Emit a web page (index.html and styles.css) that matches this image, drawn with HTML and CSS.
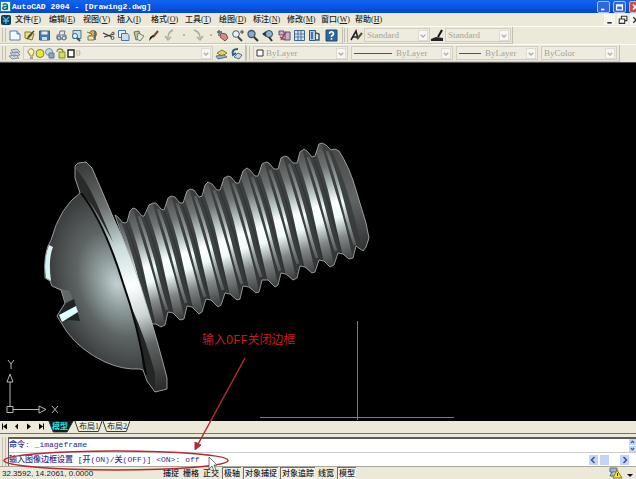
FILE: index.html
```html
<!DOCTYPE html>
<html lang="zh-CN">
<head>
<meta charset="utf-8">
<title>AutoCAD 2004 - [Drawing2.dwg]</title>
<link rel="stylesheet" href="styles.css">
</head>
<body>
<div class="app">
  <header class="titlebar">
    <svg class="app-icon" viewBox="0 0 12 12"><rect x=".5" y=".5" width="11" height="11" fill="#e6f4f0" stroke="#287c8c"/><path d="M3 4.500Q6 1.500 8 4.500V9.500M8 6Q3 5.500 3 8Q4 10.500 8 8" fill="none" stroke="#126878" stroke-width="1.700"/></svg>
    <h1 class="title">AutoCAD 2004 - [Drawing2.dwg]</h1>
    <div class="window-buttons">
      <button class="win" aria-label="最小化"><svg viewBox="0 0 12 12"><path d="M3 9h4" stroke="#fff" stroke-width="2"/></svg></button>
      <button class="win" aria-label="最大化"><svg viewBox="0 0 12 12"><path d="M2.500 3.500h7v6h-7zM2.500 4.500h7" fill="none" stroke="#fff" stroke-width="1.500"/></svg></button>
      <button class="win close" aria-label="关闭"><svg viewBox="0 0 12 12"><path d="M3 3l6 6M9 3l-6 6" stroke="#fff" stroke-width="2"/></svg></button>
    </div>
  </header>

  <nav class="menubar">
    <svg class="menu-icon" viewBox="0 0 12 12"><rect x="1" y="1" width="10" height="10" rx="2" fill="#123c58"/><path d="M3 3l3 3 3-3M6 6v4M3 7h6" stroke="#4cc0e0" stroke-width="1.300" fill="none"/></svg>
    <a href="#">文件(<u>F</u>)</a><a href="#">编辑(<u>E</u>)</a><a href="#">视图(<u>V</u>)</a><a href="#">插入(<u>I</u>)</a><a href="#">格式(<u>O</u>)</a><a href="#">工具(<u>T</u>)</a><a href="#">绘图(<u>D</u>)</a><a href="#">标注(<u>N</u>)</a><a href="#">修改(<u>M</u>)</a><a href="#">窗口(<u>W</u>)</a><a href="#">帮助(<u>H</u>)</a>
    <div class="doc-buttons">
      <button aria-label="最小化文档"><svg viewBox="0 0 10 10"><path d="M3 8h4" stroke="#333" stroke-width="1.500"/></svg></button>
      <button aria-label="还原文档"><svg viewBox="0 0 10 10"><path d="M4 4V2h5v4H7M2 4.500h5v4H2z" fill="none" stroke="#333"/></svg></button>
      <button aria-label="关闭文档"><svg viewBox="0 0 10 10"><path d="M3 3l5 5M8 3l-5 5" stroke="#333" stroke-width="1.300"/></svg></button>
    </div>
  </nav>

  <div class="toolrow">
    <div class="toolbar standard">
      <span class="grip"></span>
      <div class="group">
        <button aria-label="新建"><svg viewBox="0 0 13 13"><path d="M2 2h7l3 3v6H2z" fill="#f4faff" stroke="#5c80a0"/><path d="M9 2v3h3" fill="#a8cce4" stroke="#5c80a0"/></svg></button>
        <button aria-label="打开"><svg viewBox="0 0 13 13"><path d="M2 3h5l4 2-2 6-7-2z" fill="#f0dc88" stroke="#867440"/><path d="M5 8l6-6M4 10l5-5" stroke="#4a5034" stroke-width="1.500"/></svg></button>
        <button aria-label="保存"><svg viewBox="0 0 13 13"><path d="M1.500 2h10v9h-10z" fill="#4c7aa6" stroke="#365c80"/><path d="M3.500 2.500h6v3h-6z" fill="#e4eef4"/><path d="M4 8h5v3H4z" fill="#c4dcea"/></svg></button>
      </div>
      <div class="group">
        <button aria-label="打印"><svg viewBox="0 0 13 13"><path d="M4 6l1-4h5l-1 4M2 6h9v4H2z" fill="#e8ebee" stroke="#647684"/><circle cx="4" cy="9" r="2" fill="#b4c0c8" stroke="#54687a"/><circle cx="9" cy="9" r="2" fill="#d8e0e6" stroke="#54687a"/></svg></button>
        <button aria-label="打印预览"><svg viewBox="0 0 13 13"><path d="M3 1.500h8v8H3z" fill="#c8dff0" stroke="#4c7494"/><circle cx="5" cy="7" r="2.500" fill="#e8f6fc" stroke="#3c6484"/><path d="M7 9l3 3" stroke="#33526c" stroke-width="2"/></svg></button>
        <button aria-label="发布"><svg viewBox="0 0 13 13"><circle cx="8" cy="5" r="3.500" fill="#dcae4c" stroke="#8a6a34"/><path d="M2 3l5 2-2 2M3 7h6v4H3z" fill="#efe9b4" stroke="#7a7644"/><path d="M10 2v9" stroke="#42617c" stroke-width="1.500"/></svg></button>
      </div>
      <div class="group">
        <button aria-label="剪切"><svg viewBox="0 0 13 13"><path d="M1 4l9 4M2 8l10-3" stroke="#333" stroke-width="1.300"/><circle cx="10.500" cy="9" r="1.500" fill="none" stroke="#555"/><circle cx="11" cy="4.500" r="1.300" fill="none" stroke="#555"/></svg></button>
        <button aria-label="复制"><svg viewBox="0 0 13 13"><path d="M1.500 1.500h7v7h-7z" fill="#e6f0f8" stroke="#4e7495"/><path d="M4.500 4.500h6l1.500 2v5H4.500z" fill="#c8def0" stroke="#4e7495"/></svg></button>
        <button aria-label="粘贴"><svg viewBox="0 0 13 13"><path d="M2 3l5-1 2 7-5 2z" fill="#c0c6a0" stroke="#6c7458"/><path d="M6 4l6 3-4 5-3-2z" fill="#e4eadc" stroke="#778070"/></svg></button>
        <button aria-label="特性匹配"><svg viewBox="0 0 13 13"><path d="M11 2L6 8" stroke="#6b4a30" stroke-width="2"/><path d="M7 7l-5 5 1-4 3-2z" fill="#222"/></svg></button>
      </div>
      <div class="group undo">
        <button aria-label="放弃" disabled><svg viewBox="0 0 13 13"><path d="M9 1Q4 3 4 9M1 7l3 4 3-3" fill="none" stroke="#a9a9a0" stroke-width="1.400"/></svg></button>
        <span class="dot"></span>
        <button aria-label="重做" disabled><svg viewBox="0 0 13 13"><path d="M3 1Q9 3 9 9M6 8l3 3 3-4" fill="none" stroke="#a9a9a0" stroke-width="1.400"/></svg></button>
        <span class="dot"></span>
      </div>
      <div class="group">
        <button aria-label="实时平移"><svg viewBox="0 0 13 13"><path d="M5 4l5 1 2 4-3 3-5-4z" fill="#cf8f82" stroke="#7a4c4c"/><path d="M1 3h5M3 1v6" stroke="#446078" stroke-width="1.300"/></svg></button>
        <button aria-label="实时缩放"><svg viewBox="0 0 13 13"><circle cx="5" cy="5" r="3.300" fill="#e4f2fa" stroke="#4c5d6b"/><path d="M7 8l4 4" stroke="#444" stroke-width="2"/><path d="M9 3h4M11 1v4" stroke="#444"/></svg></button>
        <button aria-label="窗口缩放"><svg viewBox="0 0 13 13"><circle cx="5.500" cy="5" r="3.500" fill="#88acd0" stroke="#3e5368" stroke-width="1.300"/><path d="M8 8l4 4" stroke="#333" stroke-width="2"/></svg></button>
        <button aria-label="缩放上一个"><svg viewBox="0 0 13 13"><circle cx="8" cy="5" r="3.500" fill="#90b2d2" stroke="#344d64"/><path d="M1 5l4-3v6z" fill="#223c55"/><path d="M8 8l3 4" stroke="#333" stroke-width="2"/></svg></button>
      </div>
      <div class="group">
        <button aria-label="特性"><svg viewBox="0 0 13 13"><path d="M1 2h5v4H1zM7 3h5v8H7z" fill="#c4b3cc" stroke="#614c74"/><path d="M3 11l5-8M2 8l5 3" stroke="#a6444c" stroke-width="1.500"/></svg></button>
        <button aria-label="设计中心"><svg viewBox="0 0 13 13"><path d="M1.500 1.500h10v10h-10z" fill="#d2e3ee" stroke="#3e688a"/><path d="M5 2v9M8 2v9M2 5h9M2 8h9" stroke="#5f8198" stroke-width="1.200"/></svg></button>
        <button aria-label="工具选项板"><svg viewBox="0 0 13 13"><path d="M1.500 1.500h6v10h-6z" fill="#aacbe2" stroke="#31597b"/><path d="M4 3v7M8 4l3 1v6H8" fill="none" stroke="#31597b" stroke-width="1.500"/></svg></button>
      </div>
      <div class="group">
        <button aria-label="帮助"><svg viewBox="0 0 13 13"><path d="M1 1h11v11H1z" fill="#286798" stroke="#224a73"/><path d="M4.500 5q0-2.300 2-2.300T8.500 5q0 1-2 2v1M6.500 9v1.700" fill="none" stroke="#fff" stroke-width="1.500"/></svg></button>
      </div>
    </div>
    <div class="toolbar styles">
      <span class="grip"></span>
      <svg class="style-icon" viewBox="0 0 13 13"><path d="M1 11L6 2l2 8M3 8h5" fill="none" stroke="#222" stroke-width="1.600"/><path d="M12 4L7 10" stroke="#5c4734" stroke-width="2"/></svg>
      <label class="combo text-style"><select aria-label="文字样式" disabled><option>Standard</option></select><svg class="arrow" viewBox="0 0 10 12"><path d="M2 5l3 3 3-3" /></svg></label>
      <svg class="style-icon" viewBox="0 0 13 13"><path d="M0 10l5-2 7 1v3H0z" fill="#222"/><path d="M11 1L7 8" stroke="#111" stroke-width="2" fill="none"/></svg>
      <label class="combo dim-style"><select aria-label="标注样式" disabled><option>Standard</option></select><svg class="arrow" viewBox="0 0 10 12"><path d="M2 5l3 3 3-3"/></svg></label>
    </div>
  </div>

  <div class="toolrow">
    <div class="toolbar layers">
      <span class="grip"></span>
      <button aria-label="图层特性管理器"><svg viewBox="0 0 13 13"><path d="M3 3l6-1 3 3-7 1zM2 6l7-1 3 3-7 1zM1 9l7-1 3 3-7 1z" fill="#cbd3df" stroke="#8491a5"/></svg></button>
      <label class="combo layer">
        <svg class="layer-icons" viewBox="0 0 50 13">
          <path d="M2 5a3 3 0 1 1 5 2v2H4V7Q2 7 2 5z" fill="#fff8a0" stroke="#8c8454"/><path d="M4 11h3" stroke="#555"/>
          <circle cx="14" cy="6.500" r="4" fill="#e8ea36" stroke="#7b8334"/>
          <circle cx="23" cy="5" r="3.500" fill="#c7d7e0" stroke="#7790a0"/><path d="M23 6h5v5h-5z" fill="#8ca8c0" stroke="#5c7a94"/>
          <path d="M31 5q0-3 3-3t3 3" fill="none" stroke="#8c8a40" stroke-width="1.300"/><path d="M33 5h6v6h-6z" fill="#d6dd58" stroke="#848832"/>
          <path d="M42 3h6v7h-6z" fill="#fff" stroke="#222" stroke-width="1.400"/>
        </svg>
        <select aria-label="图层" disabled><option>0</option></select><svg class="arrow" viewBox="0 0 10 12"><path d="M2 5l3 3 3-3"/></svg>
      </label>
      <button aria-label="将对象的图层置为当前"><svg viewBox="0 0 13 13"><path d="M2 6l5-3 5 3-5 3z" fill="#dcd65c" stroke="#807e3c"/><path d="M1 9l8-1 3 2-9 2z" fill="#9eb2be" stroke="#60727e"/></svg></button>
      <button aria-label="上一个图层"><svg viewBox="0 0 13 13"><path d="M8 2Q1 2 3 8l3-2" fill="none" stroke="#315a84" stroke-width="2"/><path d="M4 10l4-4 4 2-3 4z" fill="#cbd8e2" stroke="#58718a"/></svg></button>
    </div>
    <div class="toolbar properties">
      <span class="grip"></span>
      <label class="combo color"><svg class="swatch" viewBox="0 0 8 10"><path d="M1 2h6v6H1z" fill="#fff" stroke="#333"/></svg><select aria-label="颜色" disabled><option>ByLayer</option></select><svg class="arrow" viewBox="0 0 10 12"><path d="M2 5l3 3 3-3"/></svg></label>
      <label class="combo linetype"><span class="line long"></span><select aria-label="线型" disabled><option>ByLayer</option></select><svg class="arrow" viewBox="0 0 10 12"><path d="M2 5l3 3 3-3"/></svg></label>
      <label class="combo weight"><span class="line"></span><select aria-label="线宽" disabled><option>ByLayer</option></select><svg class="arrow" viewBox="0 0 10 12"><path d="M2 5l3 3 3-3"/></svg></label>
      <label class="combo plot"><select aria-label="打印样式" disabled><option>ByColor</option></select><svg class="arrow" viewBox="0 0 10 12"><path d="M2 5l3 3 3-3"/></svg></label>
    </div>
  </div>

  <main class="canvas">
    <svg class="drawing" viewBox="0 63 636 357" preserveAspectRatio="xMinYMin meet">
      <defs>
        <linearGradient id="shaft" gradientUnits="userSpaceOnUse" x1="230" y1="176" x2="264" y2="288"><stop offset="0" stop-color="#3c3e3e"/><stop offset=".5" stop-color="#3c4242"/><stop offset="1" stop-color="#323434"/></linearGradient>
        <linearGradient id="crest" gradientUnits="userSpaceOnUse" x1="128" y1="210" x2="162" y2="325"><stop offset="0" stop-color="#4b4d4d"/><stop offset=".2" stop-color="#707474"/><stop offset=".38" stop-color="#bccaca"/><stop offset=".5" stop-color="#fff"/><stop offset=".63" stop-color="#eefafa"/><stop offset=".8" stop-color="#818686"/><stop offset="1" stop-color="#3d3f3f"/></linearGradient>
        <linearGradient id="thin" gradientUnits="userSpaceOnUse" x1="128" y1="210" x2="162" y2="325"><stop offset=".08" stop-color="#555959"/><stop offset=".35" stop-color="#9da5a5"/><stop offset=".52" stop-color="#f4ffff"/><stop offset=".7" stop-color="#909999"/><stop offset=".95" stop-color="#444"/></linearGradient>
        <radialGradient id="dome" gradientUnits="userSpaceOnUse" cx="0" cy="0" r="1" gradientTransform="translate(117 284) rotate(-22) scale(68 100)"><stop offset="0" stop-color="#c2d1d1"/><stop offset=".25" stop-color="#929f9f"/><stop offset=".55" stop-color="#5e6464"/><stop offset="1" stop-color="#343636"/></radialGradient>
        <linearGradient id="rim" gradientUnits="userSpaceOnUse" x1="80" y1="164" x2="163" y2="390"><stop offset="0" stop-color="#373838"/><stop offset=".2" stop-color="#6c6f6f"/><stop offset=".38" stop-color="#c8dcdc"/><stop offset=".55" stop-color="#fcffff"/><stop offset=".68" stop-color="#cdd5d5"/><stop offset=".8" stop-color="#606464"/><stop offset="1" stop-color="#282929"/></linearGradient>
        <linearGradient id="tip" gradientUnits="userSpaceOnUse" x1="332" y1="150" x2="364" y2="250"><stop offset="0" stop-color="#484a4a"/><stop offset=".5" stop-color="#626565"/><stop offset="1" stop-color="#303232"/></linearGradient>
        <path id="shaft-outline" d="M115 215L118 217 122 222 125 223 127 222 130 211 133 208 136 209 142 216 144 216 149 205 153 203 156 203 161 209 164 210 168 198 171 196 175 197 180 203 183 203 187 191 190 189 194 190 199 197 202 196 205 185 208 182 212 184 217 190 220 190 224 178 228 176 231 177 236 183 239 183 243 171 247 168 250 170 255 176 258 176 262 164 266 162 269 163 274 169 278 169 281 158 285 156 288 157 293 163 297 163 300 152 304 149 307 151 312 157 315 156 319 144 322 143 326 145 331 150 335 149 339 151Q350 168 356 190L366 223 369 238 366 247 363 251 356 246 353 258 349 259 343 254 338 253 334 265 330 267 324 261 319 260 315 272 312 273 305 267 300 266 297 278 293 280 286 274 281 273 278 285 275 287 268 280 262 280 259 292 256 293 249 287 243 286 240 299 237 300 230 294 225 293 221 305 218 307 211 300 206 299 202 312 199 314 192 307 187 306 184 319 180 320 173 313 168 312 165 325 161 327 156 324 152 324Z"/>
        <clipPath id="shaft-clip"><use href="#shaft-outline"/></clipPath>
        <g id="thread">
          <path d="M124 207Q137 240 143 268T157 330L166 329Q159 294 151 268T132 205Z" fill="url(#crest)"/>
          <path d="M139 216Q148 240 155 268T167 310" fill="none" stroke="url(#thin)" stroke-width="3"/>
          <path d="M122 213Q133 242 141 270T155 326" fill="none" stroke="#2d3232"/>
        </g>
        <path id="head-outline" d="M75 166L78 163 86 162 92 168Q105 198 113 217Q135 263 148 310Q160 350 167 378L167 389 155 392 147 381 143 370 140 369Q123 370 105 362Q80 350 67 332L57 316 65 303 61 290 52 286 50 281 45 278Q43 252 51 240Q60 207 80 193L75 178Z"/>
      </defs>
      <g clip-path="url(#shaft-clip)">
        <use href="#shaft-outline" fill="url(#shaft)"/>
        <use href="#thread" transform="translate(-19 7)"/><use href="#thread"/><use href="#thread" transform="translate(19 -7)"/><use href="#thread" transform="translate(38 -13)"/><use href="#thread" transform="translate(56 -20)"/><use href="#thread" transform="translate(75 -26)"/><use href="#thread" transform="translate(94 -33)"/><use href="#thread" transform="translate(113 -39)"/><use href="#thread" transform="translate(131 -46)"/><use href="#thread" transform="translate(150 -52)"/><use href="#thread" transform="translate(169 -59)"/><use href="#thread" transform="translate(188 -65)"/>
        <path d="M330 146Q350 190 363 255L373 240Q357 180 339 149Z" fill="url(#tip)"/>
      </g>
      <use href="#shaft-outline" fill="none" stroke="#b4b8b8" stroke-width=".8"/>
      <use href="#head-outline" fill="url(#dome)"/>
      <path d="M75 166L78 163 86 162 92 168Q105 198 113 217Q135 263 148 310Q160 350 167 378V389L155 392 147 381Q139 330 123 283Q104 223 80 193L75 178Z" fill="url(#rim)"/>
      <path d="M75 168Q86 179 96 202L113 242 102 222Q92 202 80 193L75 178Z" fill="#292b2b"/>
      <path d="M131 306Q146 340 155 373V392L147 381 143 370Q140 335 131 306Z" fill="#242626"/>
      <path d="M81 193Q104 222 123 283Q138 325 146 375" fill="none" stroke="#050606" stroke-width="2"/>
      <path d="M49 245L53 247Q48 259 51 281L46 278Q43 260 49 245Z" fill="#d8f4f4"/>
      <path d="M53 287L70 291 73 300 66 303 61 290Z" fill="#626868"/>
      <path d="M66 303L74 299 80 321 69 320 61 322 57 316Z" fill="#1e2525"/>
      <path d="M59 315L76 306 78 312 62 322Z" fill="#e0ffff"/>
      <use href="#head-outline" fill="none" stroke="#b4b8b8" stroke-width=".8"/>
      <path d="M357.500 321V420M260 417.500H454" stroke="#4d8f89" stroke-width="1"/>
      <g fill="none" stroke="#b8b8b8"><path d="M7 406.500h6v6H7zM10 406V382M13 409.500h26M7 382l3-8 3 8zM39 406l7 3.500-7 3.500z"/><path d="M8 360l3 4 3-4M11 364v5M52 406l6 7M58 406l-6 7"/></g>
      <text class="callout" x="202" y="344">输入OFF关闭边框</text>
    </svg>
  </main>

  <nav class="tabs">
    <button aria-label="第一个"><svg viewBox="0 0 10 10"><path d="M2 2h1v6H2zM7 2v6L3 5z"/></svg></button>
    <button aria-label="上一个"><svg viewBox="0 0 10 10"><path d="M6 2v6L3 5z"/></svg></button>
    <button aria-label="下一个"><svg viewBox="0 0 10 10"><path d="M3 2v6l4-3z"/></svg></button>
    <button aria-label="最后一个"><svg viewBox="0 0 10 10"><path d="M3 2v6l4-3zM7 2h1v6H7z"/></svg></button>
    <a class="tab active" href="#"><svg viewBox="0 0 30 12" preserveAspectRatio="none"><path d="M1 0L6 11H22L29 0Z"/></svg><span>模型</span></a>
    <a class="tab" href="#"><svg viewBox="0 0 30 12" preserveAspectRatio="none"><path d="M1 0L5 10.500H26L30 0"/></svg><span>布局1</span></a>
    <a class="tab" href="#"><svg viewBox="0 0 30 12" preserveAspectRatio="none"><path d="M1 0L5 10.500H26L30 0"/></svg><span>布局2</span></a>
  </nav>

  <section class="command">
    <span class="command-grip"></span>
    <div class="command-box">
      <div class="history"><p>命令: _imageframe</p><div class="vscroll"><button aria-label="向上滚动"><svg viewBox="0 0 8 8"><path d="M2 5l2-2 2 2"/></svg></button><button aria-label="向下滚动"><svg viewBox="0 0 8 8"><path d="M2 3l2 2 2-2"/></svg></button></div></div>
      <div class="prompt"><label for="cmd">输入图像边框设置 [开(ON)/关(OFF)] &lt;ON&gt;:</label><input id="cmd" value="off">
        <div class="hscroll"><button aria-label="向左滚动"><svg viewBox="0 0 8 8"><path d="M5 1L2 4l3 3"/></svg></button><span class="thumb"></span><button aria-label="向右滚动"><svg viewBox="0 0 8 8"><path d="M3 1l3 3-3 3"/></svg></button></div>
      </div>
    </div>
  </section>

  <footer class="status">
    <output class="coords">32.3592, 14.2061, 0.0000</output>
    <button>捕捉</button><button>栅格</button><button>正交</button><button class="on">极轴</button><button class="on">对象捕捉</button><button class="on">对象追踪</button><button>线宽</button><button class="on">模型</button>
    <svg class="tray" viewBox="0 0 28 12"><path d="M2 1h7v4H2zM4 5l-2 4h6" fill="#a4b6c4" stroke="#506c84"/><path d="M9 3l5 8H5z" fill="#f4e43c" stroke="#8d7a1c"/><path d="M9.500 6v3" stroke="#222"/><path d="M19 7h6l-3 3z" fill="#111"/></svg>
  </footer>

  <svg class="annotations" viewBox="0 0 636 479" preserveAspectRatio="xMinYMax meet">
    <g fill="none" stroke="#b32a34" stroke-width="1.500"><ellipse cx="116" cy="460.500" rx="112" ry="9.500"/><path d="M245 358L197 446"/><path d="M195 442v8l6-5z" fill="#b32a34" stroke-width="1"/></g>
    <path d="M209 457v12l3-3 2 5 2-1-2-5h3z" fill="#fff" stroke="#555" stroke-width=".8"/>
  </svg>
</div>
</body>
</html>
```
FILE: styles.css
```css
* { box-sizing: border-box; }
body {
  margin: 0;
  font: 8px/12px "Liberation Serif", "Noto Sans CJK SC", serif;
  color: #222;
  background: #ece9d8;
}
button { margin: 0; padding: 0; border: 0; background: none; font: inherit; color: inherit; }
svg { display: block; }
a { color: inherit; text-decoration: none; }
.app { position: relative; display: flex; flex-direction: column; height: 100vh; overflow: hidden; }

.titlebar { display: flex; align-items: center; flex: none; height: 13px; background: linear-gradient(#1265ef, #0753e4 60%, #0347c8); color: #fff; }
.app-icon { width: 11px; height: 11px; }
.title { flex: 1; margin: 0 0 0 1px; font: bold 8px/12px "Liberation Mono", monospace; }
.window-buttons { display: flex; gap: 3px; margin-right: -6px; }
.win { width: 13px; height: 12px; border: 1px solid #a8c2f8; border-radius: 2px; background: #3267dc; }
.win svg { width: 11px; height: 10px; }
.win.close { background: #db4b2d; }

.menubar { display: flex; align-items: center; flex: none; height: 13px; gap: 8px; font-weight: 500; }
.menubar a { width: 26px; white-space: nowrap; }
.menu-icon { width: 12px; height: 12px; margin-right: -5px; }
.doc-buttons { display: flex; gap: 2px; margin-left: auto; margin-right: -5px; }
.doc-buttons button { width: 11px; height: 11px; background: #f7f6ef; }

.toolrow { display: flex; flex: none; height: 18px; border-top: 1px solid #fffef6; }
.toolbar { display: flex; align-items: center; border-right: 1px solid #c2bfb0; border-bottom: 1px solid #c9c6b7; }
.toolbar button { width: 13px; height: 13px; flex: none; }
.grip { width: 4px; height: 14px; margin: 0 2px; flex: none; border: solid #c4c1b2; border-width: 0 1px; }
.standard { gap: 4px; padding-right: 4px; }
.standard .grip { margin-right: -2px; }
.group { display: flex; align-items: center; gap: 2px; }
.undo { gap: 6px; }
.dot { width: 2px; height: 2px; background: #b8b6aa; }
.styles { gap: 1px; padding-right: 1px; }
.styles .grip { margin: 0 1px; }
.style-icon { width: 13px; height: 13px; flex: none; }
.combo { display: flex; align-items: center; height: 14px; padding: 0 1px 0 2px; border: 1px solid #d2cfc1; background: #efecdf; }
.combo select { appearance: none; flex: 1; min-width: 0; height: 12px; padding: 0; border: 0; background: none; font: 9px/12px "Liberation Serif", serif; color: #a5a397; opacity: 1; }
.arrow { width: 10px; height: 11px; flex: none; background: #f8f7f2; border: 1px solid #dedbd0; }
.arrow path { fill: none; stroke: #b3b1a9; stroke-width: 2; }
.text-style, .dim-style { width: 66px; }
.layers { gap: 2px; padding-right: 2px; }
.layers .grip { margin-right: 0; }
.layer { width: 190px; }
.layer-icons { width: 50px; height: 13px; flex: none; }
.properties { gap: 3px; padding-right: 2px; }
.properties .grip { margin: 0; }
.color { width: 95px; }
.swatch { width: 8px; height: 10px; margin-right: 2px; flex: none; }
.linetype { width: 102px; }
.weight { width: 82px; }
.plot { width: 76px; }
.line { width: 22px; height: 1px; margin-right: 4px; flex: none; background: #55554a; }
.line.long { width: 38px; }

.canvas { flex: 1; min-height: 0; background: #000; border-top: 1px solid #555; }
.drawing { width: 100%; height: 100%; }
.callout { font: 12px "Liberation Mono", "Noto Sans CJK SC", monospace; fill: #c51c22; }

.tabs { display: flex; align-items: flex-start; flex: none; height: 13px; border-bottom: 1px solid #77756b; }
.tabs button { width: 12px; height: 11px; }
.tabs button svg { width: 10px; height: 11px; }
.tab { position: relative; width: 28px; height: 12px; padding-left: 5px; line-height: 11px; white-space: nowrap; }
.tab svg { position: absolute; inset: 0; width: 100%; height: 100%; fill: #f2efdf; stroke: #333; }
.tab span { position: relative; }
.tab.active { width: 26px; padding-left: 4px; color: #28e2e2; font-weight: bold; }
.tab.active svg { fill: #001414; }

.command { display: flex; flex: none; height: 33px; padding-top: 3px; border-bottom: 1px solid #aaa89c; }
.command-grip { width: 4px; margin: 0 2px; border: solid #c4c1b2; border-width: 0 1px; }
.command-box { flex: 1; border: solid #5e5d55; border-width: 2px 0 0 1px; color: #2c2c94; font: 500 8px/14px "Liberation Mono", "Noto Sans CJK SC", monospace; background: #fff; }
.history { display: flex; height: 14px; line-height: 12px; border-bottom: 1px solid #ccc; }
.history p { flex: 1; margin: 0; }
.vscroll { width: 7px; }
.vscroll button, .hscroll button { display: block; background: #c3d3fb; }
.vscroll button { width: 7px; height: 6px; margin-bottom: 1px; }
.vscroll svg { width: 7px; height: 6px; }
.vscroll path, .hscroll path { fill: none; stroke: #3d568e; stroke-width: 1.5; }
.prompt { display: flex; gap: 5px; height: 13px; }
.prompt label { white-space: nowrap; }
.prompt input { flex: 1; min-width: 0; height: 14px; padding: 0; border: 0; outline: 0; background: none; font: inherit; color: inherit; }
.hscroll { display: flex; align-items: center; gap: 2px; padding-right: 7px; }
.hscroll button { width: 9px; height: 10px; }
.hscroll svg { width: 9px; height: 8px; }
.thumb { width: 9px; height: 10px; margin-right: 9px; background: #c3d3fb; }

.status { display: flex; flex: none; align-items: center; gap: 2px; height: 12px; font: 500 8px/11px "Liberation Sans", "Noto Sans CJK SC", sans-serif; }
.coords { width: 160px; padding-left: 2px; }
.status button { padding: 0 1px; height: 12px; white-space: nowrap; }
.status .on { border: solid #6f6d63; border-width: 1px 0 0 1px; background: #f5f3e9; line-height: 10px; }
.tray { width: 28px; height: 12px; margin-left: auto; }

.annotations { position: absolute; inset: 0; width: 100%; height: 100%; pointer-events: none; }
```
